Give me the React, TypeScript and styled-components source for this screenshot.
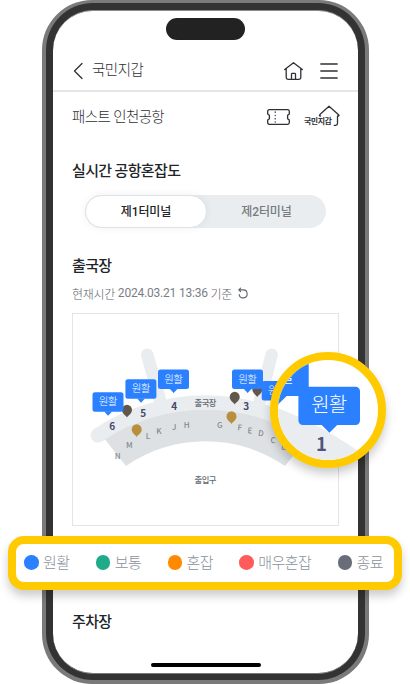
import React from "react";
import styled, { createGlobalStyle } from "styled-components";

const GlobalStyle = createGlobalStyle`
  * { box-sizing: border-box; }
  body {
    margin: 0;
    background: #fff;
    overflow: hidden;
    font-family: Roboto, "Noto Sans CJK KR", sans-serif;
  }
`;

const Page = styled.main`
  position: relative;
  width: 410px;
  height: 684px;
  padding-left: 42px;
  background: #fff;
`;

const PhoneShell = styled.div`
  width: 327px;
  height: 684px;
  padding: 3px 4px 4px;
  border-radius: 50px;
  background: #7a7a7a;
`;

const PhoneBezel = styled.div`
  height: 100%;
  padding: 7px 7px 6px;
  border-radius: 47px;
  background: #333;
`;

const Screen = styled.div`
  display: flex;
  flex-direction: column;
  height: 100%;
  border-top: 1px solid #8c8c8c;
  border-bottom: 1px solid #777;
  border-radius: 40px;
  background: #fff;
`;

const Island = styled.div`
  width: 79px;
  height: 22px;
  margin: 7px 0 0 113px;
  border-radius: 11px;
  background: #222;
`;

const TopBar = styled.header`
  display: flex;
  align-items: center;
  height: 52px;
  padding: 11px 20px 0 20px;
  border-bottom: 2px solid #e4e5e6;
`;

const BarTitle = styled.h1`
  flex: 1;
  margin: 1px 0 0 9px;
  font-size: 14.5px;
  font-weight: 300;
  line-height: 20px;
  letter-spacing: -0.5px;
  color: #2d2f33;
`;

const Icon = styled.svg<{ $gap?: number }>`
  flex: none;
  margin-left: ${(p) => p.$gap ?? 0}px;
  overflow: visible;
  fill: none;
  stroke: #2f3136;
  stroke-width: 1.3;
  stroke-linecap: round;
  stroke-linejoin: round;
`;

const RefreshIcon = styled(Icon)`
  stroke: #5d6168;
  stroke-width: 1.1;
`;

const ServiceRow = styled.div`
  display: flex;
  align-items: center;
  height: 50px;
  padding: 0 18px 0 19px;
`;

const ServiceName = styled.span`
  flex: 1;
  padding-top: 2px;
  font-size: 14.5px;
  font-weight: 300;
  line-height: 20px;
  letter-spacing: -0.6px;
  color: #2d2f33;
`;

const SectionTitle = styled.h2<{ $top: number }>`
  margin: ${(p) => p.$top}px 0 0 19px;
  font-size: 15px;
  font-weight: 500;
  line-height: 20px;
  letter-spacing: -0.65px;
  color: #222428;
`;

const Tabs = styled.div`
  display: flex;
  width: 241px;
  height: 33px;
  margin: 14px 0 0 32px;
  border-radius: 17px;
  background: #e9edf0;
`;

const Tab = styled.button<{ $active?: boolean }>`
  width: ${(p) => (p.$active ? 122 : 119)}px;
  padding: 1px 0 0;
  border: ${(p) => (p.$active ? "1px solid #dfe2e5" : "0")};
  border-radius: 17px;
  background: ${(p) => (p.$active ? "#fff" : "transparent")};
  box-shadow: ${(p) => (p.$active ? "0 0 8px rgba(0, 0, 0, 0.06)" : "none")};
  font: 500 12px/20px Roboto, "Noto Sans CJK KR", sans-serif;
  letter-spacing: -0.1px;
  color: ${(p) => (p.$active ? "#222428" : "#777b80")};
`;

const Timestamp = styled.div`
  display: flex;
  align-items: center;
  height: 20px;
  margin: 7px 0 0 19px;
  font-size: 12px;
  font-weight: 300;
  letter-spacing: -0.25px;
  white-space: pre;
  color: #5d6168;
`;

const Digits = styled.span`
  font-weight: 400;
  letter-spacing: -0.2px;
  color: #7a7e85;
`;

const MapFrame = styled.div`
  width: 267px;
  height: 213px;
  margin: 10px 0 0 19px;
  border: 1px solid #e4e4e6;
`;

const Drawing = styled.svg`
  display: block;
  font-family: "Noto Sans CJK KR", sans-serif;
  text-anchor: middle;
`;

const HomeIndicator = styled.div`
  width: 110px;
  height: 4px;
  margin: auto auto 6px 98px;
  border-radius: 2px;
  background: #000;
`;

const Magnifier = styled.div`
  position: absolute;
  left: 270px;
  top: 352px;
  width: 116px;
  height: 116px;
  border: 8px solid #ffcb00;
  border-radius: 50%;
  overflow: hidden;
  background: #fff;
  box-shadow: 0 6px 10px rgba(0, 0, 0, 0.2);
`;

const Legend = styled.ul`
  position: absolute;
  left: 8px;
  top: 536px;
  display: flex;
  align-items: center;
  width: 394px;
  height: 54px;
  margin: 0;
  padding: 0 0 1px 8px;
  gap: 26.4px;
  border: 8px solid #ffcb00;
  border-radius: 16px;
  background: #fff;
  box-shadow: 0 6px 10px rgba(0, 0, 0, 0.2);
  list-style: none;
`;

const LegendItem = styled.li<{ $color: string }>`
  display: flex;
  align-items: center;
  gap: 4.4px;
  font-size: 15px;
  font-weight: 300;
  line-height: 20px;
  letter-spacing: -0.6px;
  white-space: nowrap;
  color: #8b919b;

  &::before {
    content: "";
    width: 14.6px;
    height: 14.6px;
    border-radius: 50%;
    background: ${(p) => p.$color};
  }
`;

const legend = [
  ["원활", "#2a80ff"],
  ["보통", "#1eab88"],
  ["혼잡", "#ff8a00"],
  ["매우혼잡", "#ff5a5c"],
  ["종료", "#686d78"],
];

const gates: [string, number, number][] = [
  ["6", 112.3, 426], ["5", 143.3, 413.7], ["4", 174.3, 406], ["3", 246.3, 406.3],
];

const counters: [string, number, number, number][] = [
  ["N", 117.7, 455.7, 0], ["M", 129.3, 444.7, 0], ["L", 148, 435.7, 0], ["K", 159, 431.3, 0],
  ["J", 174.3, 427, 0], ["H", 186.7, 425, 0], ["G", 219.7, 425, 0], ["F", 239.7, 427.7, 5],
  ["E", 250, 430.7, 5], ["D", 261, 433.3, 8], ["C", 273, 440.3, 10], ["B", 284, 447, 15],
];

const pins: [number, number, string][] = [
  [127, 410.5, "#62574b"], [136.7, 430, "#b98e3c"], [234.7, 397.5, "#62574b"],
  [257.3, 390, "#62574b"], [231.5, 417, "#b98e3c"],
];

const bubbles: [number, number][] = [
  [92.5, 392.3], [125.4, 379.3], [158, 369.5], [261.7, 381], [232, 369.5],
];

function AirportMap() {
  return (
    <Drawing width="265" height="211" viewBox="73 314 265 211">
      <g stroke="#e9edf0" strokeWidth="12.5" strokeLinecap="round">
        <path d="M147.2 354.8L160 400" />
        <path d="M271.6 354.8L260 400" />
      </g>
      <path d="M93 429.8A200 200 0 0 1 318 429.8Q324 436 318 442L306 440H105L100.5 442A7.3 7.3 0 0 1 93 429.8Z" fill="#e9edf0" />
      <path d="M105 439.5A184 184 0 0 1 306 439.5L285 466A140 140 0 0 0 126 466Z" fill="#dde1e4" />
      <g fontSize="10" fontWeight="700" fill="#43486a">
        {gates.map(([t, x, y]) => <text key={t} x={x} y={y + 3.6}>{t}</text>)}
      </g>
      <g fontSize="8" fontWeight="500" fill="#858a92">
        {counters.map(([t, x, y, r]) => (
          <text key={t} x={x} y={y + 2.8} transform={`rotate(${r} ${x} ${y})`}>{t}</text>
        ))}
      </g>
      <g fontSize="8.3" fontWeight="500" letterSpacing="-0.5" fill="#666a72">
        <text x="205.3" y="406">출국장</text>
        <text x="205.3" y="483">출입구</text>
      </g>
      {pins.map(([x, y, c]) => (
        <path key={`${x}`} transform={`translate(${x} ${y})`} fill={c}
          d="M0 7C-1.6 4.5-5 3-5-.5A5 5.2 0 0 1 5-.5C5 3 1.6 4.5 0 7Z" />
      ))}
      {bubbles.map(([x, y]) => (
        <g key={x} transform={`translate(${x} ${y})`}>
          <rect width="31" height="19.5" rx="2.5" fill="#2a80ff" />
          <path d="M11.7 19.3L15.6 23.4L19.6 19.3Z" fill="#2a80ff" />
          <text x="15.3" y="13" fontSize="10.5" fontWeight="300" letterSpacing="-0.6" fill="#fff">원활</text>
        </g>
      ))}
    </Drawing>
  );
}

function MagnifiedMap() {
  return (
    <Drawing width="100" height="100" viewBox="278 360 100 100">
      <path d="M270 405.5Q320 422 378 465H270Z" fill="#e9edf0" />
      <path d="M270 350H308.7V396H286.7L278 404.5L270 396Z" fill="#2a80ff" />
      <text x="276.5" y="383" fontSize="20" fontWeight="300" letterSpacing="-0.8" fill="#fff">원활</text>
      <rect x="298.4" y="386.7" width="61.6" height="38.4" rx="4.5" fill="#2a80ff" />
      <path d="M321.7 425L329.4 432.8L337.2 425Z" fill="#2a80ff" />
      <text x="328.8" y="412" fontSize="20" fontWeight="300" letterSpacing="-0.8" fill="#fff">원활</text>
      <text x="321.4" y="451" fontSize="18.5" fontWeight="700" fill="#50547a">1</text>
    </Drawing>
  );
}

export default function App() {
  return (
    <Page>
      <GlobalStyle />
      <PhoneShell>
        <PhoneBezel>
          <Screen>
            <Island />
            <TopBar>
              <Icon width="10" height="18" viewBox="0 0 10 18"><path d="M9 1.5L1.5 9L9 16.5" /></Icon>
              <BarTitle>국민지갑</BarTitle>
              <Icon width="19" height="18" viewBox="0 0 19 18">
                <path d="M.7 7.5L9.5.7L18.3 7.5M2.2 6.5V15.5Q2.2 17.3 4 17.3H15Q16.8 17.3 16.8 15.5V6.5M7.5 17V12.2Q7.5 11.4 8.3 11.4H10.7Q11.5 11.4 11.5 12.2V17" />
              </Icon>
              <Icon $gap={17} width="18" height="16" viewBox="0 0 18 16"><path d="M.8 1H17.2M.8 8H17.2M.8 15H17.2" /></Icon>
            </TopBar>
            <ServiceRow>
              <ServiceName>패스트 인천공항</ServiceName>
              <Icon width="23" height="16" viewBox="0 0 23 16">
                <path d="M2.4.7H20.6Q22.3.7 22.3 2.4V5L20.6 6.3V9.7L22.3 11V13.6Q22.3 15.3 20.6 15.3H2.4Q.7 15.3 .7 13.6V11L2.4 9.7V6.3L.7 5V2.4Q.7.7 2.4.7Z" />
                <path d="M8.2 3V3.3M8.2 6.3V6.6M8.2 9.6V9.9M8.2 12.8V13.1" />
              </Icon>
              <Icon $gap={13} width="37" height="22" viewBox="0 0 37 22">
                <path d="M17.5 10H16.9Q16 9.5 16.9 8.6L26 .2L35.6 8.7Q36.5 9.7 35.5 10H34.5V17.6Q34.5 19.4 32.7 19.4H31.3" />
                <text x="1" y="18.3" fontFamily="Noto Sans CJK KR, sans-serif" fontSize="8" fontWeight="700" letterSpacing="-.5" fill="#2f3136" stroke="none">국민지갑</text>
              </Icon>
            </ServiceRow>
            <SectionTitle $top={19}>실시간 공항혼잡도</SectionTitle>
            <Tabs>
              <Tab $active>제1터미널</Tab>
              <Tab>제2터미널</Tab>
            </Tabs>
            <SectionTitle $top={28}>출국장</SectionTitle>
            <Timestamp>
              현재시간 <Digits>2024.03.21 13:36</Digits> 기준
              <RefreshIcon $gap={6} width="10" height="11" viewBox="0 0 10 11">
                <path d="M.8 1.9H5.2A4 4 0 1 1 1.2 6.6M2.6.2L.8 1.9L2.6 3.7" />
              </RefreshIcon>
            </Timestamp>
            <MapFrame><AirportMap /></MapFrame>
            <SectionTitle $top={86}>주차장</SectionTitle>
            <HomeIndicator />
          </Screen>
        </PhoneBezel>
      </PhoneShell>
      <Magnifier><MagnifiedMap /></Magnifier>
      <Legend>
        {legend.map(([label, color]) => <LegendItem key={label} $color={color}>{label}</LegendItem>)}
      </Legend>
    </Page>
  );
}
